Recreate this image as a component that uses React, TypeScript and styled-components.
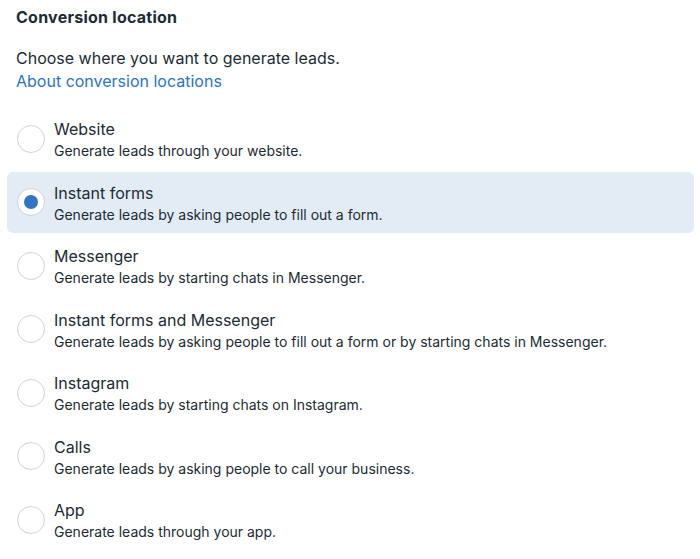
import React from 'react';
import styled, { createGlobalStyle } from 'styled-components';

const GlobalStyle = createGlobalStyle`
  body {
    margin: 0;
    background: #ffffff;
    font-family: Inter, 'Liberation Sans', Arial, sans-serif;
    color: #1c2b33;
  }
`;

type Option = { id: string; title: string; description: string };

const options: Option[] = [
  { id: 'website', title: 'Website', description: 'Generate leads through your website.' },
  { id: 'forms', title: 'Instant forms', description: 'Generate leads by asking people to fill out a form.' },
  { id: 'messenger', title: 'Messenger', description: 'Generate leads by starting chats in Messenger.' },
  {
    id: 'forms-messenger',
    title: 'Instant forms and Messenger',
    description: 'Generate leads by asking people to fill out a form or by starting chats in Messenger.',
  },
  { id: 'instagram', title: 'Instagram', description: 'Generate leads by starting chats on Instagram.' },
  { id: 'calls', title: 'Calls', description: 'Generate leads by asking people to call your business.' },
  { id: 'app', title: 'App', description: 'Generate leads through your app.' },
];

export default function App() {
  const [selected, setSelected] = React.useState('forms');

  return (
    <Panel>
      <GlobalStyle />
      <Heading>Conversion location</Heading>
      <Intro>
        Choose where you want to generate leads.
        <br />
        <Link href="#">About conversion locations</Link>
      </Intro>
      <List>
        {options.map((opt) => (
          <Item key={opt.id} active={selected === opt.id} onClick={() => setSelected(opt.id)}>
            <Radio active={selected === opt.id} />
            <Texts>
              <Title>{opt.title}</Title>
              <Description>{opt.description}</Description>
            </Texts>
          </Item>
        ))}
      </List>
    </Panel>
  );
}

const Panel = styled.div`
  width: 700px;
  padding: 6px 6px 0 7px;
  box-sizing: border-box;
`;

const Heading = styled.h2`
  margin: 0 0 19px 9px;
  font-size: 16px;
  line-height: 22px;
  font-weight: 700;
  letter-spacing: 0.25px;
  color: #1c2b33;
`;

const Intro = styled.p`
  margin: 0 0 15px 9px;
  font-size: 16px;
  line-height: 23px;
  color: #1c2b33;
`;

const Link = styled.a`
  color: #2d74c1;
  text-decoration: none;
`;

const List = styled.div`
  display: flex;
  flex-direction: column;
  gap: 2.5px;
`;

const Item = styled.div<{ active: boolean }>`
  display: flex;
  align-items: center;
  gap: 9px;
  height: 61px;
  box-sizing: border-box;
  padding: 0 10px;
  border-radius: 6px;
  background: ${(p) => (p.active ? '#e3ecf5' : 'transparent')};
  cursor: pointer;
`;

const Radio = styled.span<{ active: boolean }>`
  flex-shrink: 0;
  width: 28px;
  height: 28px;
  box-sizing: border-box;
  border-radius: 50%;
  border: 1px solid #cdd2d8;
  background: #ffffff;
  display: flex;
  align-items: center;
  justify-content: center;
  &::after {
    content: '';
    display: ${(p) => (p.active ? 'block' : 'none')};
    width: 14px;
    height: 14px;
    border-radius: 50%;
    background: #3273c2;
  }
`;

const Texts = styled.div`
  display: flex;
  flex-direction: column;
  padding-top: 3px;
`;

const Title = styled.div`
  font-size: 16px;
  line-height: 22px;
  color: #1c2b33;
`;

const Description = styled.div`
  font-size: 14px;
  line-height: 22px;
  color: #1c2b33;
`;
